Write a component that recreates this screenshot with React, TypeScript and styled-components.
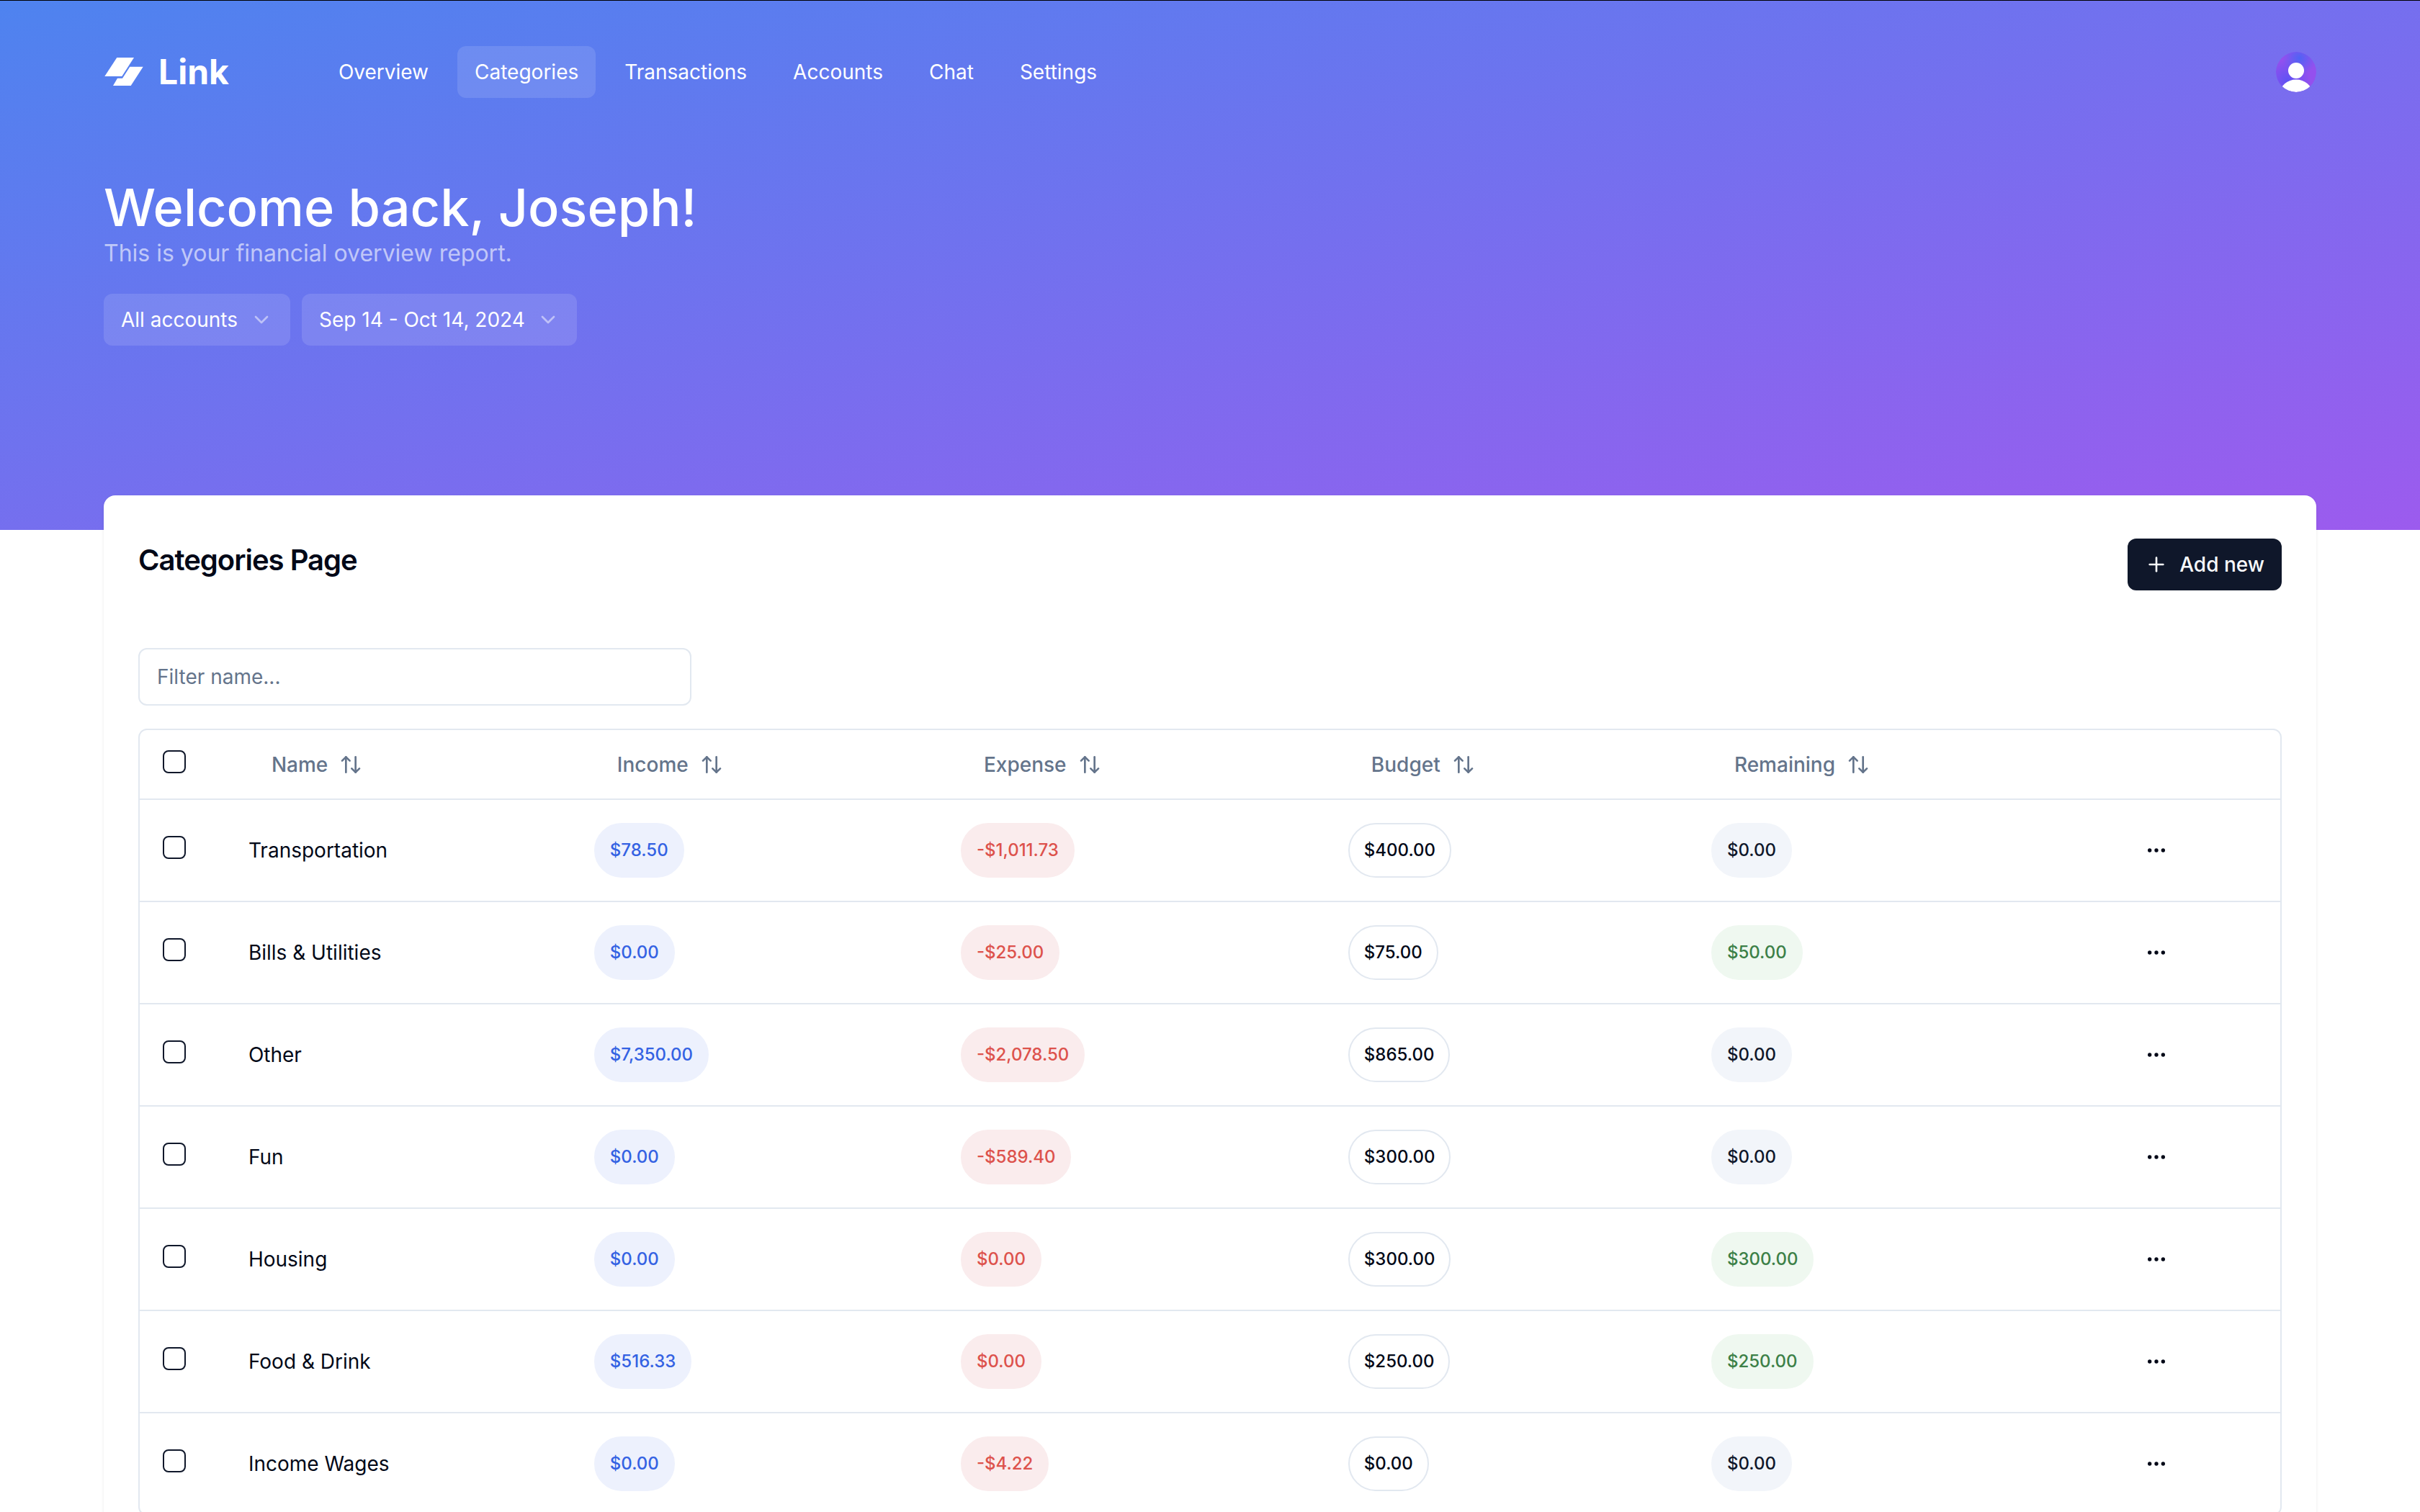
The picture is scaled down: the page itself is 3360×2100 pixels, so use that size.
import React from "react";
import styled, { createGlobalStyle } from "styled-components";
import { ArrowUpDown, ChevronDown, Ellipsis, Plus } from "lucide-react";

const Global = createGlobalStyle`
  *, *::before, *::after { box-sizing: border-box; }
  html, body { margin: 0; background: #fff; }
  body, button, input, select {
    font-family: Inter, "Liberation Sans", sans-serif;
    font-size: 28px;
    line-height: 40px;
  }
  body { color: #020817; overflow-x: hidden; }
`;

const Header = styled.header`
  border-top: 1px solid #000;
  padding: 63px 144px 256px;
  background: linear-gradient(to bottom right, #4e83ef, #9c5bee);
  background-origin: border-box;
  color: #fff;
`;

const TopBar = styled.div`
  display: flex;
  align-items: center;
  justify-content: space-between;
  margin-bottom: 112px;
`;

const TopLeft = styled.div`
  display: flex;
  align-items: center;
  gap: 128px;
`;

const Brand = styled.a`
  display: flex;
  align-items: center;
  gap: 20px;
  color: #fff;
  font-size: 48px;
  line-height: 64px;
  font-weight: 700;
  text-decoration: none;
`;

const Nav = styled.nav`
  display: flex;
  gap: 16px;
`;

const NavLink = styled.a<{ $active?: boolean }>`
  padding: 16px 24px;
  border-radius: 12px;
  background: ${(p) => (p.$active ? "rgba(255, 255, 255, 0.12)" : "transparent")};
  color: #fff;
  font-weight: 400;
  text-decoration: none;
`;

const AvatarButton = styled.button`
  display: block;
  width: 56px;
  height: 56px;
  padding: 0;
  border: 0;
  border-radius: 50%;
  overflow: hidden;
  background: none;
`;

const Welcome = styled.h1`
  margin: 0;
  font-size: 72px;
  line-height: 80px;
  font-weight: 500;
`;

const Subtitle = styled.p`
  margin: 0 0 32px;
  font-size: 32px;
  line-height: 48px;
  color: rgba(255, 255, 255, 0.6);
`;

const Filters = styled.div`
  display: flex;
  gap: 16px;
`;

const SelectBox = styled.div`
  display: grid;
  align-items: center;
  border-radius: 12px;
  background: rgba(255, 255, 255, 0.12);

  select, svg { grid-area: 1 / 1; }
  svg { justify-self: end; margin-right: 24px; opacity: 0.5; pointer-events: none; }
`;

const AccountSelect = styled.select`
  appearance: none;
  height: 72px;
  padding: 0 72px 0 24px;
  border: 0;
  background: transparent;
  color: #fff;
  font-weight: 400;
`;

const DateButton = styled.button`
  display: flex;
  align-items: center;
  gap: 16px;
  height: 72px;
  padding: 0 24px;
  border: 0;
  border-radius: 12px;
  background: rgba(255, 255, 255, 0.12);
  color: #fff;
  font-weight: 400;

  svg { opacity: 0.5; }
`;

const Card = styled.main`
  margin: -48px 144px 96px;
  padding: 48px;
  border-radius: 16px;
  background: #fff;
  box-shadow: 0 2px 4px rgba(0, 0, 0, 0.08);
`;

const CardHeader = styled.div`
  display: flex;
  align-items: center;
  justify-content: space-between;
  margin-bottom: 80px;
`;

const CardTitle = styled.h2`
  margin: 0;
  font-size: 40px;
  line-height: 56px;
  font-weight: 600;
  letter-spacing: -0.025em;
`;

const Actions = styled.div`
  padding-top: 12px;
`;

const AddButton = styled.button`
  display: flex;
  align-items: center;
  gap: 16px;
  height: 72px;
  padding: 0 24px;
  border: 0;
  border-radius: 12px;
  background: #0f172a;
  color: #f8fafc;
  font-weight: 500;
`;

const FilterInput = styled.input`
  display: block;
  width: 100%;
  max-width: 768px;
  height: 80px;
  margin-bottom: 32px;
  padding: 0 24px;
  border: 2px solid #e2e8f0;
  border-radius: 12px;
  background: #fff;

  &::placeholder { color: #64748b; opacity: 1; }
`;

const TableFrame = styled.div`
  border: 2px solid #e2e8f0;
  border-radius: 12px;
  overflow: hidden;
`;

const Table = styled.table`
  width: 100%;
  table-layout: fixed;
  border-collapse: separate;
  border-spacing: 0;
`;

const Col = styled.col<{ $share: number }>`
  width: ${(p) => p.$share}%;
`;

const HeadCell = styled.th`
  height: 97px;
  padding: 0 32px;
  border-bottom: 2px solid #e2e8f0;
  text-align: left;
  color: #64748b;
`;

const Cell = styled.td`
  padding: 32px;
  border-bottom: 2px solid #e2e8f0;

  tbody tr:last-child > & { border-bottom: 0; }
`;

const SortButton = styled.button`
  display: flex;
  align-items: center;
  gap: 16px;
  height: 80px;
  padding: 0 32px;
  border: 0;
  background: transparent;
  color: #64748b;
  font-weight: 500;
`;

const CheckBox = styled.input`
  appearance: none;
  display: block;
  width: 32px;
  height: 32px;
  margin: 0 0 8px;
  border: 2px solid #0f172a;
  border-radius: 8px;

  &:checked { background: #0f172a; }
`;

type Tone = "blue" | "red" | "outline" | "gray" | "green";

const tones: Record<Tone, { text: string; fill: string; line: string }> = {
  blue: { text: "#3462e3", fill: "#edf1fd", line: "#edf1fd" },
  red: { text: "#dd524c", fill: "#faeced", line: "#faeced" },
  outline: { text: "#020817", fill: "#ffffff", line: "#e2e8f0" },
  gray: { text: "#0f172a", fill: "#f2f5fa", line: "#f2f5fa" },
  green: { text: "#3c8047", fill: "#eff8f0", line: "#eff8f0" },
};

const Badge = styled.span<{ $tone: Tone }>`
  display: block;
  width: fit-content;
  padding: 20px;
  border: 2px solid ${(p) => tones[p.$tone].line};
  border-radius: 38px;
  background: ${(p) => tones[p.$tone].fill};
  color: ${(p) => tones[p.$tone].text};
  font-size: 24px;
  line-height: 32px;
  font-weight: 500;
`;

const MenuButton = styled.button`
  display: grid;
  place-items: center;
  width: 64px;
  height: 64px;
  padding: 0;
  border: 0;
  background: transparent;
  color: #020817;
`;

const Logo = () => (
  <svg width="56" height="56" viewBox="0 0 56 56" fill="#fff" aria-hidden="true">
    <path d="M18.300 8H42L25.300 34h-24z" />
    <path d="M36.300 20.700h18.400L37.700 47H13l6-10.300h7z" />
  </svg>
);

const Avatar = () => (
  <svg width="56" height="56" viewBox="0 0 56 56" aria-hidden="true">
    <defs>
      <radialGradient id="avatarTop" cx="0.58" cy="0.16" r="0.42">
        <stop offset="0" stopColor="#4f63f4" />
        <stop offset="1" stopColor="#4f63f4" stopOpacity="0" />
      </radialGradient>
      <radialGradient id="avatarLow" cx="0.3" cy="0.72" r="0.55">
        <stop offset="0" stopColor="#5f52f4" />
        <stop offset="1" stopColor="#5f52f4" stopOpacity="0" />
      </radialGradient>
      <clipPath id="avatarClip">
        <circle cx="28" cy="28" r="28" />
      </clipPath>
    </defs>
    <g clipPath="url(#avatarClip)">
      <rect width="56" height="56" fill="#9450ee" />
      <rect width="56" height="56" fill="url(#avatarLow)" />
      <rect width="56" height="56" fill="url(#avatarTop)" />
      <circle cx="28" cy="26" r="11" fill="#fff" />
      <ellipse cx="28" cy="57" rx="22" ry="18.500" fill="#fff" />
    </g>
  </svg>
);

const links = ["Overview", "Categories", "Transactions", "Accounts", "Chat", "Settings"];
const columns = ["Name", "Income", "Expense", "Budget", "Remaining"];
const shares = [4, 16.15, 17.13, 18.1, 16.96, 19.72, 7.94];

const rows = [
  { name: "Transportation", income: "$78.50", expense: "-$1,011.73", budget: "$400.00", remaining: "$0.00" },
  { name: "Bills & Utilities", income: "$0.00", expense: "-$25.00", budget: "$75.00", remaining: "$50.00" },
  { name: "Other", income: "$7,350.00", expense: "-$2,078.50", budget: "$865.00", remaining: "$0.00" },
  { name: "Fun", income: "$0.00", expense: "-$589.40", budget: "$300.00", remaining: "$0.00" },
  { name: "Housing", income: "$0.00", expense: "$0.00", budget: "$300.00", remaining: "$300.00" },
  { name: "Food & Drink", income: "$516.33", expense: "$0.00", budget: "$250.00", remaining: "$250.00" },
  { name: "Income Wages", income: "$0.00", expense: "-$4.22", budget: "$0.00", remaining: "$0.00" },
];

export default function App() {
  return (
    <>
      <Global />
      <Header>
        <TopBar>
          <TopLeft>
            <Brand href="#">
              <Logo />
              Link
            </Brand>
            <Nav>
              {links.map((link) => (
                <NavLink key={link} href="#" $active={link === "Categories"}>
                  {link}
                </NavLink>
              ))}
            </Nav>
          </TopLeft>
          <AvatarButton aria-label="Account">
            <Avatar />
          </AvatarButton>
        </TopBar>
        <Welcome>Welcome back, Joseph!</Welcome>
        <Subtitle>This is your financial overview report.</Subtitle>
        <Filters>
          <SelectBox>
            <AccountSelect aria-label="Account filter">
              <option>All accounts</option>
            </AccountSelect>
            <ChevronDown size={32} />
          </SelectBox>
          <DateButton>
            Sep 14 - Oct 14, 2024
            <ChevronDown size={32} />
          </DateButton>
        </Filters>
      </Header>
      <Card>
        <CardHeader>
          <CardTitle>Categories Page</CardTitle>
          <Actions>
            <AddButton>
              <Plus size={32} />
              Add new
            </AddButton>
          </Actions>
        </CardHeader>
        <FilterInput aria-label="Filter name" placeholder="Filter name..." />
        <TableFrame>
          <Table>
            <colgroup>
              {shares.map((share, i) => (
                <Col key={i} $share={share} />
              ))}
            </colgroup>
            <thead>
              <tr>
                <HeadCell>
                  <CheckBox type="checkbox" aria-label="Select all" />
                </HeadCell>
                {columns.map((column) => (
                  <HeadCell key={column}>
                    <SortButton>
                      {column}
                      <ArrowUpDown size={32} />
                    </SortButton>
                  </HeadCell>
                ))}
                <HeadCell />
              </tr>
            </thead>
            <tbody>
              {rows.map((row) => (
                <tr key={row.name}>
                  <Cell>
                    <CheckBox type="checkbox" aria-label={`Select ${row.name}`} />
                  </Cell>
                  <Cell>{row.name}</Cell>
                  <Cell>
                    <Badge $tone="blue">{row.income}</Badge>
                  </Cell>
                  <Cell>
                    <Badge $tone="red">{row.expense}</Badge>
                  </Cell>
                  <Cell>
                    <Badge $tone="outline">{row.budget}</Badge>
                  </Cell>
                  <Cell>
                    <Badge $tone={row.remaining === "$0.00" ? "gray" : "green"}>{row.remaining}</Badge>
                  </Cell>
                  <Cell>
                    <MenuButton aria-label={`Actions for ${row.name}`}>
                      <Ellipsis size={32} />
                    </MenuButton>
                  </Cell>
                </tr>
              ))}
            </tbody>
          </Table>
        </TableFrame>
      </Card>
    </>
  );
}
